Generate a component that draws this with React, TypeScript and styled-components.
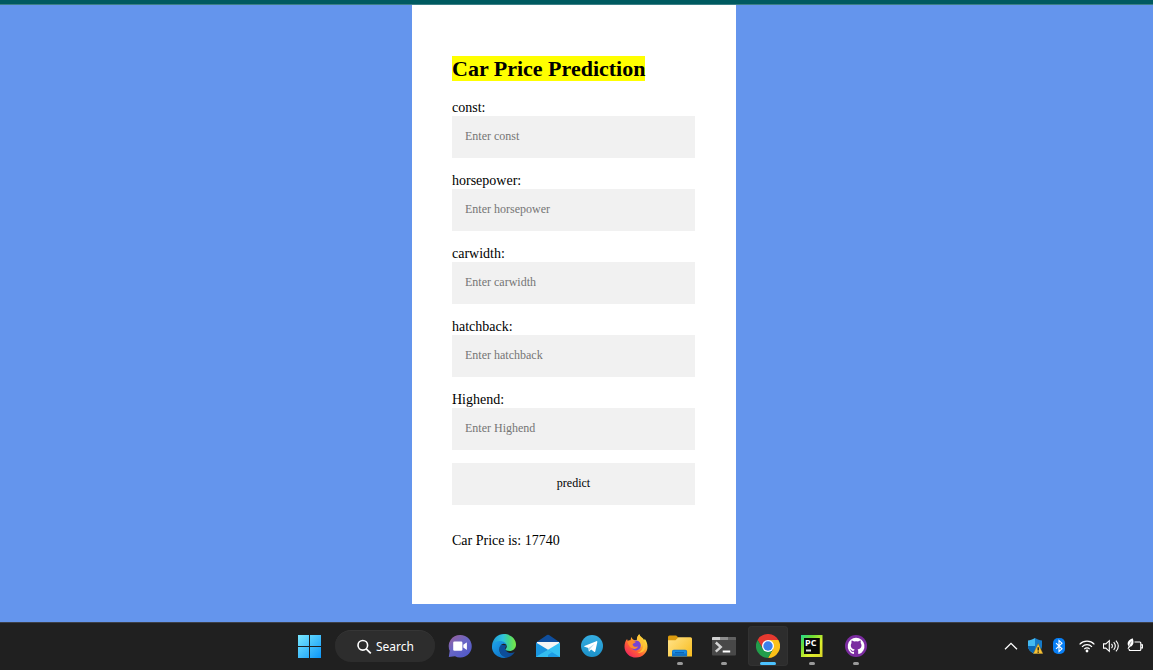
import React from "react";
import styled, { createGlobalStyle } from "styled-components";

const GlobalStyle = createGlobalStyle`
  * { box-sizing: border-box; }
  body {
    margin: 0;
    background: #6495ed;
    color: #000;
    font-family: "Liberation Serif", "Times New Roman", serif;
    font-size: 14px;
  }
`;

const Page = styled.div`
  display: flex;
  flex-direction: column;
  min-height: 100vh;
`;

const BrowserEdge = styled.div`
  height: 5px;
  background: #005a60;
  border-bottom: 1px solid #3c7f86;
`;

const Content = styled.main`
  flex: 1;
  display: flex;
  justify-content: center;
  align-items: flex-start;
  padding: 0 5px 18px 0;
`;

const Panel = styled.section`
  width: 324px;
  padding: 52px 41px 54px 40px;
  background: #fff;
`;

const Title = styled.h2`
  margin: 0 0 17px;
  font-size: 22px;
  line-height: 24px;
`;

const Highlight = styled.mark`
  background: #ff0;
  color: inherit;
`;

const Form = styled.form`
  display: flex;
  flex-direction: column;
  gap: 13px;
`;

const Field = styled.div`
  display: flex;
  flex-direction: column;
`;

const Label = styled.label`
  padding-top: 2px;
  line-height: 16px;
`;

const TextInput = styled.input`
  height: 42px;
  padding: 0 13px 1px;
  border: 0;
  border-radius: 0;
  background: #f1f1f1;
  font-family: inherit;
  font-size: 12px;
  &::placeholder { color: #757575; }
`;

const SubmitButton = styled.button`
  height: 42px;
  padding: 0 0 1px;
  border: 0;
  background: #f1f1f1;
  color: #000;
  font-family: inherit;
  font-size: 12px;
`;

const Result = styled.p`
  margin: 27px 0 0;
  line-height: 18px;
`;

const Taskbar = styled.footer`
  display: grid;
  grid-template-columns: 290fr auto 277fr;
  align-items: center;
  height: 48px;
  background: #202020;
  box-shadow: inset 0 1px #3d4048;
`;

const Apps = styled.nav`
  grid-column: 2;
  display: flex;
  align-items: center;
  gap: 4px;
`;

const AppButton = styled.button<{ $active?: boolean }>`
  position: relative;
  display: flex;
  align-items: center;
  justify-content: center;
  width: 40px;
  height: 40px;
  padding: 0;
  border: 0;
  border-radius: 4px;
  background: ${(p) => (p.$active ? "#2d2d2d" : "transparent")};
  box-shadow: ${(p) => (p.$active ? "inset 0 0 0 1px #323232" : "none")};
`;

const RunMark = styled.span<{ $active?: boolean }>`
  position: absolute;
  bottom: 1px;
  left: 50%;
  transform: translateX(-50%);
  width: ${(p) => (p.$active ? 16 : 6)}px;
  height: 3px;
  border-radius: 2px;
  background: ${(p) => (p.$active ? "#4cc2ff" : "#9a9a9a")};
`;

const SearchButton = styled.button`
  display: flex;
  align-items: center;
  justify-content: center;
  gap: 4px;
  width: 100px;
  height: 32px;
  margin: 0 1px;
  padding: 0;
  border: 0;
  border-top: 1px solid #363636;
  border-radius: 16px;
  background: #2d2d2d;
  color: #fff;
  font-family: "Noto Sans", "Segoe UI", sans-serif;
  font-size: 12px;
`;

const Tray = styled.div`
  justify-self: end;
  display: flex;
  align-items: center;
  padding-right: 6px;
`;

const TrayButton = styled.button<{ $spaced?: boolean }>`
  display: flex;
  align-items: center;
  justify-content: center;
  width: 24px;
  height: 40px;
  margin-left: ${(p) => (p.$spaced ? 4 : 0)}px;
  padding: 0;
  border: 0;
  background: transparent;
  color: #fff;
`;

const Icon = ({ size = 24, children }: { size?: number; children: React.ReactNode }) => (
  <svg width={size} height={size} viewBox={`0 0 ${size} ${size}`} fill="none" aria-hidden="true">
    {children}
  </svg>
);

const WindowsIcon = () => (
  <Icon>
    <defs>
      <linearGradient id="win" x1="0" y1="0" x2="24" y2="24" gradientUnits="userSpaceOnUse">
        <stop stopColor="#7beaff" />
        <stop offset="1" stopColor="#0a94f8" />
      </linearGradient>
    </defs>
    <path fill="url(#win)" d="M0 1h11v11H0zM12 1h11v11H12zM0 13h11v11H0zM12 13h11v11H12z" />
  </Icon>
);

const SearchIcon = () => (
  <Icon size={16}>
    <circle cx="6.8" cy="6.3" r="4.8" stroke="#fff" strokeWidth="1.6" />
    <path d="M10.2 9.8l4.6 4.6" stroke="#fff" strokeWidth="1.7" />
  </Icon>
);

const ChatIcon = () => (
  <Icon>
    <defs>
      <linearGradient id="chat" x1="5" y1="1" x2="20" y2="22" gradientUnits="userSpaceOnUse">
        <stop stopColor="#94609f" />
        <stop offset=".45" stopColor="#6966c5" />
        <stop offset="1" stopColor="#5059c9" />
      </linearGradient>
    </defs>
    <path fill="url(#chat)" d="M12 1a11.3 11.3 0 1 1-5 21.2L.8 23l.9-6.2A11.2 11.2 0 0 1 12 1z" />
    <rect x="5.2" y="7.5" width="9.2" height="9.2" rx="1.3" fill="#fff" />
    <path fill="#fff" d="M15.3 10.7l3.2-2.3q.4-.2.4.4v6.6q0 .6-.4.4l-3.2-2.3z" />
  </Icon>
);

const EdgeIcon = () => (
  <Icon>
    <defs>
      <linearGradient id="edgeTop" x1="1" y1="9" x2="23" y2="9" gradientUnits="userSpaceOnUse">
        <stop stopColor="#209ed8" />
        <stop offset=".45" stopColor="#2fc2df" />
        <stop offset=".7" stopColor="#42d48c" />
        <stop offset="1" stopColor="#74e64a" />
      </linearGradient>
      <linearGradient id="edgeLow" x1="3" y1="10" x2="14" y2="23" gradientUnits="userSpaceOnUse">
        <stop stopColor="#1b9be4" />
        <stop offset="1" stopColor="#0d6fc5" />
      </linearGradient>
    </defs>
    <path fill="#0d4d99" d="M8 10.5c-2.2 5 .5 12 6.3 13.2 4-.6 6.8-2.8 8.4-5.8-4 2.4-9.4.6-9.4-3.4 0-1.2.6-2 1.2-3z" />
    <path fill="url(#edgeLow)" d="M.1 11.5C.8 7.6 4.7 5.8 8.2 6c4.6.2 7 3.7 6.4 6-.2-1.5-1.5-2.4-3-2.3-3 .2-4.7 3.1-4.3 6.3.5 4.2 3.9 7.1 7.6 7.6C6.2 25.6-.8 19-.1 11.5z" />
    <path fill="url(#edgeTop)" d="M.1 11.4C.8 4.6 5.8.1 12 .1c6.8 0 12 4.9 12 10.3 0 4-3 6.5-6.5 6.5-2.4 0-4-.8-4-1.5 0-.5 1.3-1 1.3-3.2 0-3.1-3.2-5.3-6.8-5.3C4.4 6.9 1.5 8.7.1 11.4z" />
  </Icon>
);

const MailIcon = () => (
  <Icon>
    <path fill="#0f4e9d" d="M0 8.5L11 1.1q1-.6 2 0L24 8.500V12H0z" />
    <path fill="#f5f5f5" d="M1 8h22v8H1z" />
    <path fill="#1a95e0" d="M0 8.600l12 7.100L1.200 23H0z" />
    <path fill="#35c1f4" d="M24 8.600L0 23h24z" />
    <path fill="#1d9ce5" d="M12 15.800L24 23H12z" />
    <path fill="#33bdf1" d="M0 23l12-7.200 4 2.500L9 23z" />
  </Icon>
);

const TelegramIcon = () => (
  <Icon>
    <defs>
      <linearGradient id="tg" x1="12" y1="1" x2="12" y2="23" gradientUnits="userSpaceOnUse">
        <stop stopColor="#35ade1" />
        <stop offset="1" stopColor="#1c91c9" />
      </linearGradient>
    </defs>
    <circle cx="12" cy="12" r="11" fill="url(#tg)" />
    <path fill="#fff" d="M4.400 12.100L16.300 7.200c.8-.3 1.100.1 1 1l-2 9c-.2.8-.6.9-1.200.5l-3-2.200-1.700 1.700c-.4.4-.7.1-.7-.5L8.400 14l-3.800-1.200c-.7-.2-.7-.5-.2-.7z" />
    <path fill="#b6dbef" d="M8.500 14l6.200-4.200-4.600 5.100-.7 2.400z" />
  </Icon>
);

const FirefoxIcon = () => (
  <Icon>
    <defs>
      <linearGradient id="ffx" x1="20" y1="3" x2="4" y2="22" gradientUnits="userSpaceOnUse">
        <stop stopColor="#fff044" />
        <stop offset=".35" stopColor="#ffa62f" />
        <stop offset=".65" stopColor="#ff5a38" />
        <stop offset="1" stopColor="#ee2460" />
      </linearGradient>
    </defs>
    <path fill="url(#ffx)" d="M15.200.3c1 2.600 3.800 3.500 5 5.900l.5-1.400c1.800 2.200 2.800 5 2.800 7.700A11.500 11 0 0 1 .5 12.700c0-3.100.8-5.800 2.600-7.700l.5 1.800c1-.4 2-.5 3-.2 0-1.400.3-2.600 1.100-3.600.2 1.600 1 2.500 2.300 3h3c-.1-2.200.7-4.300 2.200-5.700z" />
    <circle cx="11.800" cy="11.400" r="5" fill="#7844d4" />
    <path fill="#ff8a2d" d="M3.500 8c1.300-2.100 4.200-2.300 6-1l2.200.5c.1 1.500-2.300 1.800-3.100 2.700.2 2.300 3.500 3.500 5.500 2-1.600 4.500-8.600 3.600-10.600-4.200z" />
    <path fill="#ffc336" d="M12.800 6c3.300.8 5 3.700 4 7.200 1.500-1.200 1.800-2.800 1.500-4.200 2.200 4.400-.5 8.500-4.800 10 5.600.3 8.700-3.800 8-8.700-.7-4.200-5.100-5.300-6.300-10-1.500 1.400-2.300 3.500-2.400 5.700z" />
  </Icon>
);

const FolderIcon = () => (
  <Icon>
    <defs>
      <linearGradient id="fold" x1="2" y1="4" x2="22" y2="22" gradientUnits="userSpaceOnUse">
        <stop stopColor="#ffe184" />
        <stop offset="1" stopColor="#f9bf25" />
      </linearGradient>
    </defs>
    <path fill="#dc9b0e" d="M0 3q0-1.500 1.500-1.500h6.700L11 4h11v7H0z" />
    <path fill="url(#fold)" d="M0 6.200h7.500l3-3h12q1.500 0 1.500 1.500v17.800H0z" />
    <path fill="#1272c2" d="M4 22.500v-5q0-1.800 1.800-1.800h11.500q1.800 0 1.800 1.800v5z" />
    <path fill="#188ce2" d="M4.800 16.500h13.500v3H4.800z" />
    <path stroke="#0c5aa5" strokeWidth="1" d="M7 18.700h9" />
  </Icon>
);

const TerminalIcon = () => (
  <Icon>
    <rect y="3" width="24" height="18.500" rx="1" fill="#484848" />
    <path fill="#d0d0d0" d="M1 3h7v3H0V4q0-1 1-1z" />
    <path fill="#8d8d8d" d="M8 3h8v3H8z" />
    <path fill="#626262" d="M16 3h7q1 0 1 1v2h-8z" />
    <path d="M3.800 8.500l5 4.600-5 4.600" stroke="#d4d4d4" strokeWidth="2.400" />
    <path d="M10.700 17.500h7.500" stroke="#fff" strokeWidth="2" />
  </Icon>
);

const ChromeIcon = () => (
  <Icon>
    <path fill="#e5392f" d="M1.600 6A12 12 0 0 1 22.400 6H12L7 15z" />
    <path fill="#fbc117" d="M22.400 6A12 12 0 0 1 12 24l5-9-5-9z" />
    <path fill="#229d4b" d="M12 24A12 12 0 0 1 1.600 6L7 15h10z" />
    <circle cx="12" cy="12" r="6" fill="#fff" />
    <circle cx="12" cy="12" r="4.700" fill="#3b80ea" />
  </Icon>
);

const PyCharmIcon = () => (
  <Icon>
    <defs>
      <linearGradient id="pyc" x1="1" y1="1" x2="22" y2="22" gradientUnits="userSpaceOnUse">
        <stop stopColor="#22dc91" />
        <stop offset=".3" stopColor="#6edc35" />
        <stop offset=".65" stopColor="#ddf02d" />
        <stop offset="1" stopColor="#d8d528" />
      </linearGradient>
    </defs>
    <path fill="url(#pyc)" d="M1 1h21.500v22H1z" />
    <path fill="#080808" d="M4 4h15.800v16H4z" />
    <text x="5" y="12" fill="#fff" fontFamily="Open Sans, sans-serif" fontWeight="700" fontSize="9">PC</text>
    <path fill="#ddd" d="M6 15.500h5v2H6z" />
  </Icon>
);

const GitHubIcon = () => (
  <Icon>
    <circle cx="12" cy="12" r="11" fill="#7b2ca0" />
    <path fill="#fff" d="M12 3.800a8.400 8.400 0 0 0-2.700 16.300c.5.100.7-.2.700-.5v-1.800c-2.600.5-3.200-1.100-3.300-1.500-.2-.4-.6-1-1-1.200 1.600-.2 1.600 2.100 3.200 1.900.7 0 1.100-.3 1.200-.4.100-.6.300-.9.600-1.200-2-.3-3.900-1.100-3.900-4.100 0-.9.300-1.700.8-2.300-.2-.6-.3-1.500.1-2.600 0 0 .9-.1 2.400 1a8 8 0 0 1 4 0c1.400-1.100 2.400-1 2.400-1 .4 1.100.3 2 .1 2.600.5.6.9 1.400.9 2.300 0 3-1.900 3.800-3.900 4.100.4.400.6.900.6 1.700v2.500c0 .3.200.6.700.5A8.400 8.400 0 0 0 12 3.800z" />
  </Icon>
);

const ChevronIcon = () => (
  <Icon size={16}>
    <path d="M2 11.300l6-6 6 6" stroke="#fff" strokeWidth="1.300" />
  </Icon>
);

const ShieldIcon = () => (
  <Icon size={16}>
    <path fill="#44baf2" d="M8 0C5.500 1.700 3 2.300 1 2.400V8c0 4 3.500 6.500 7 8z" />
    <path fill="#157bc9" d="M8 0c2.500 1.700 5 2.300 7 2.400V8c0 4-3.500 6.500-7 8z" />
    <path fill="#0b67b4" d="M1 8h7v8C4.500 14.500 1 12 1 8z" />
    <path fill="#f8c234" stroke="#725b25" strokeWidth=".4" d="M11.200 5.500L16 15.800H6.200z" />
    <path stroke="#111" strokeWidth="1.300" d="M11.200 9.200v3.400M11.200 13.500v1.300" />
  </Icon>
);

const BluetoothIcon = () => (
  <Icon size={16}>
    <rect x="2" width="12" height="16" rx="5" fill="#087ff5" />
    <path d="M5 5.200l6 5.600-3 2.700v-11l3 2.700L5 10.800" stroke="#fff" strokeWidth="1.100" />
  </Icon>
);

const WifiIcon = () => (
  <Icon size={16}>
    <path d="M.6 6.300c4.200-4.200 10.600-4.200 14.800 0M3 8.800c2.800-2.900 7.200-2.900 10 0M5.300 11.100c1.500-1.600 3.900-1.600 5.400 0" stroke="#fff" strokeWidth="1.200" />
    <circle cx="8" cy="13" r="1.400" fill="#fff" />
  </Icon>
);

const SpeakerIcon = () => (
  <Icon size={16}>
    <path d="M.5 5.900h2.300l3.500-3.200v10.600l-3.500-3.200H.5z" stroke="#fff" strokeWidth="1.100" />
    <path d="M8.500 5.800q1.800 2.200 0 4.400M10.700 4.200q3.200 3.800 0 7.600M12.900 2.600q4.800 5.400 0 10.800" stroke="#fff" strokeWidth="1.100" />
  </Icon>
);

const BatteryIcon = () => (
  <Icon size={16}>
    <path d="M7.500 4h5.300q1 0 1 1v6.500q0 1-1 1H3.200q-1 0-1-1V11M14 6.800h1.500v3H14" stroke="#fff" strokeWidth="1.200" />
    <path fill="#fff" d="M5.600.2c1.700 3.500 1 7.900-2.500 8.500L1.400 11 .5 10.400l1.100-2C-.8 5 1.500 1.700 5.600.2z" />
    <path stroke="#202020" strokeWidth=".5" d="M4.300 3.500L1.900 8.200" />
  </Icon>
);

const fields = ["const", "horsepower", "carwidth", "hatchback", "Highend"];

const apps = [
  { name: "Chat", icon: <ChatIcon /> },
  { name: "Edge", icon: <EdgeIcon /> },
  { name: "Mail", icon: <MailIcon /> },
  { name: "Telegram", icon: <TelegramIcon /> },
  { name: "Firefox", icon: <FirefoxIcon /> },
  { name: "File Explorer", icon: <FolderIcon />, running: true },
  { name: "Terminal", icon: <TerminalIcon />, running: true },
  { name: "Chrome", icon: <ChromeIcon />, running: true, active: true },
  { name: "PyCharm", icon: <PyCharmIcon />, running: true },
  { name: "GitHub Desktop", icon: <GitHubIcon />, running: true },
];

const trayItems = [
  { name: "Show hidden icons", icon: <ChevronIcon /> },
  { name: "Security", icon: <ShieldIcon /> },
  { name: "Bluetooth", icon: <BluetoothIcon /> },
  { name: "Wi-Fi", icon: <WifiIcon />, spaced: true },
  { name: "Volume", icon: <SpeakerIcon /> },
  { name: "Battery", icon: <BatteryIcon /> },
];

export default function App() {
  return (
    <Page>
      <GlobalStyle />
      <BrowserEdge />
      <Content>
        <Panel>
          <Title>
            <Highlight>Car Price Prediction</Highlight>
          </Title>
          <Form onSubmit={(e) => e.preventDefault()}>
            {fields.map((name) => (
              <Field key={name}>
                <Label htmlFor={name}>{name}:</Label>
                <TextInput id={name} name={name} type="text" placeholder={`Enter ${name}`} />
              </Field>
            ))}
            <SubmitButton type="submit">predict</SubmitButton>
          </Form>
          <Result>Car Price is: 17740</Result>
        </Panel>
      </Content>
      <Taskbar>
        <Apps aria-label="Taskbar">
          <AppButton aria-label="Start">
            <WindowsIcon />
          </AppButton>
          <SearchButton>
            <SearchIcon />
            Search
          </SearchButton>
          {apps.map((app) => (
            <AppButton key={app.name} aria-label={app.name} $active={app.active}>
              {app.icon}
              {app.running && <RunMark $active={app.active} />}
            </AppButton>
          ))}
        </Apps>
        <Tray>
          {trayItems.map((item) => (
            <TrayButton key={item.name} aria-label={item.name} $spaced={item.spaced}>
              {item.icon}
            </TrayButton>
          ))}
        </Tray>
      </Taskbar>
    </Page>
  );
}
